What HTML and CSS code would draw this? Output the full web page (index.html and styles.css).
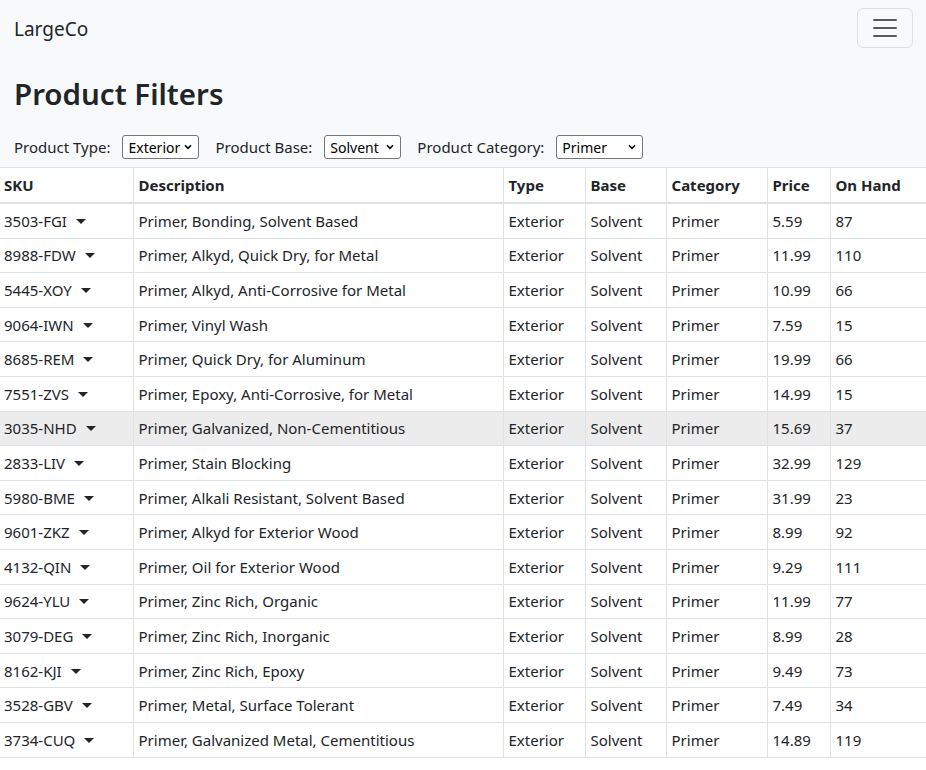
FILE: index.html
```html
<!DOCTYPE html>
<html lang="en">
<head>
<meta charset="utf-8">
<title>LargeCo - Product Filters</title>
<link rel="stylesheet" href="styles.css">
</head>
<body>
<nav class="navbar">
  <a class="brand" href="#">LargeCo</a>
  <button class="toggler" type="button" aria-label="Toggle navigation">
    <svg class="toggler-icon" viewBox="0 0 30 30" width="30" height="30"><path d="M4 7h22M4 15h22M4 23h22" stroke="rgba(33,37,41,0.75)" stroke-width="2" stroke-linecap="round" fill="none"/></svg>
  </button>
</nav>
<header class="page-head">
  <h1 class="title">Product Filters</h1>
  <div class="filters">
    <label class="filter">Product Type:
      <select class="sel sel-type"><option>Exterior</option><option>Interior</option></select>
    </label>
    <label class="filter">Product Base:
      <select class="sel sel-base"><option>Solvent</option><option>Water</option></select>
    </label>
    <label class="filter">Product Category:
      <select class="sel sel-cat"><option>Primer</option><option>Topcoat</option></select>
    </label>
  </div>
</header>
<table class="products">
  <colgroup>
    <col class="c-sku"><col class="c-desc"><col class="c-type"><col class="c-base"><col class="c-cat"><col class="c-price"><col class="c-hand">
  </colgroup>
  <thead>
    <tr><th>SKU</th><th>Description</th><th>Type</th><th>Base</th><th>Category</th><th>Price</th><th>On Hand</th></tr>
  </thead>
  <tbody>
    <tr><td><span class="sku">3503-FGI</span></td><td>Primer, Bonding, Solvent Based</td><td>Exterior</td><td>Solvent</td><td>Primer</td><td>5.59</td><td>87</td></tr>
    <tr><td><span class="sku">8988-FDW</span></td><td>Primer, Alkyd, Quick Dry, for Metal</td><td>Exterior</td><td>Solvent</td><td>Primer</td><td>11.99</td><td>110</td></tr>
    <tr><td><span class="sku">5445-XOY</span></td><td>Primer, Alkyd, Anti-Corrosive for Metal</td><td>Exterior</td><td>Solvent</td><td>Primer</td><td>10.99</td><td>66</td></tr>
    <tr><td><span class="sku">9064-IWN</span></td><td>Primer, Vinyl Wash</td><td>Exterior</td><td>Solvent</td><td>Primer</td><td>7.59</td><td>15</td></tr>
    <tr><td><span class="sku">8685-REM</span></td><td>Primer, Quick Dry, for Aluminum</td><td>Exterior</td><td>Solvent</td><td>Primer</td><td>19.99</td><td>66</td></tr>
    <tr><td><span class="sku">7551-ZVS</span></td><td>Primer, Epoxy, Anti-Corrosive, for Metal</td><td>Exterior</td><td>Solvent</td><td>Primer</td><td>14.99</td><td>15</td></tr>
    <tr class="hover"><td><span class="sku">3035-NHD</span></td><td>Primer, Galvanized, Non-Cementitious</td><td>Exterior</td><td>Solvent</td><td>Primer</td><td>15.69</td><td>37</td></tr>
    <tr><td><span class="sku">2833-LIV</span></td><td>Primer, Stain Blocking</td><td>Exterior</td><td>Solvent</td><td>Primer</td><td>32.99</td><td>129</td></tr>
    <tr><td><span class="sku">5980-BME</span></td><td>Primer, Alkali Resistant, Solvent Based</td><td>Exterior</td><td>Solvent</td><td>Primer</td><td>31.99</td><td>23</td></tr>
    <tr><td><span class="sku">9601-ZKZ</span></td><td>Primer, Alkyd for Exterior Wood</td><td>Exterior</td><td>Solvent</td><td>Primer</td><td>8.99</td><td>92</td></tr>
    <tr><td><span class="sku">4132-QIN</span></td><td>Primer, Oil for Exterior Wood</td><td>Exterior</td><td>Solvent</td><td>Primer</td><td>9.29</td><td>111</td></tr>
    <tr><td><span class="sku">9624-YLU</span></td><td>Primer, Zinc Rich, Organic</td><td>Exterior</td><td>Solvent</td><td>Primer</td><td>11.99</td><td>77</td></tr>
    <tr><td><span class="sku">3079-DEG</span></td><td>Primer, Zinc Rich, Inorganic</td><td>Exterior</td><td>Solvent</td><td>Primer</td><td>8.99</td><td>28</td></tr>
    <tr><td><span class="sku">8162-KJI</span></td><td>Primer, Zinc Rich, Epoxy</td><td>Exterior</td><td>Solvent</td><td>Primer</td><td>9.49</td><td>73</td></tr>
    <tr><td><span class="sku">3528-GBV</span></td><td>Primer, Metal, Surface Tolerant</td><td>Exterior</td><td>Solvent</td><td>Primer</td><td>7.49</td><td>34</td></tr>
    <tr><td><span class="sku">3734-CUQ</span></td><td>Primer, Galvanized Metal, Cementitious</td><td>Exterior</td><td>Solvent</td><td>Primer</td><td>14.89</td><td>119</td></tr>
  </tbody>
</table>
</body>
</html>
```

FILE: styles.css
```css
* { box-sizing: border-box; }

html, body { margin: 0; padding: 0; }

body {
  font-family: "Noto Sans", "Open Sans", "Liberation Sans", sans-serif;
  font-size: 15px;
  line-height: 1.5;
  color: #212529;
  background: #ffffff;
}

.navbar {
  display: flex;
  align-items: center;
  justify-content: space-between;
  padding: 8px 13px 8px 14px;
  background: #f8f9fa;
}

.brand {
  font-size: 19px;
  line-height: 30px;
  padding-top: 2px;
  color: #212529;
  text-decoration: none;
}

.toggler {
  width: 56px;
  height: 40px;
  padding: 0;
  display: flex;
  align-items: center;
  justify-content: center;
  background: transparent;
  border: 1px solid rgba(0, 0, 0, 0.1);
  border-radius: 6px;
}

.toggler-icon { display: block; }

.page-head {
  background: #f8f9fa;
  padding: 16px 14px 8px;
}

.title {
  margin: 0;
  font-size: 29.5px;
  line-height: 43px;
  font-weight: 600;
}

.filters {
  display: flex;
  align-items: center;
  gap: 16px;
  margin-top: 20px;
  height: 24px;
}

.filter {
  display: flex;
  align-items: center;
  gap: 12px;
  white-space: nowrap;
}

.sel {
  appearance: none;
  -webkit-appearance: none;
  height: 24px;
  font-family: inherit;
  font-size: 14px;
  line-height: 22px;
  color: #000;
  padding: 1px 14px 0 5px;
  border: 1px solid #767676;
  border-radius: 3px;
  background-color: #fff;
  background-image: url("data:image/svg+xml,%3Csvg xmlns='http://www.w3.org/2000/svg' viewBox='0 0 10 7'%3E%3Cpath d='M1.2 1.4 5 5.2 8.8 1.4' fill='none' stroke='%23000' stroke-width='1.9'/%3E%3C/svg%3E");
  background-repeat: no-repeat;
  background-position: right 6px center;
  background-size: 8px 6px;
}

.sel-type { width: 77px; }
.sel-base { width: 77px; }
.sel-cat { width: 87px; }

.products {
  width: 100%;
  table-layout: fixed;
  border-collapse: collapse;
  background: #fff;
}

.c-sku { width: 133px; }
.c-desc { width: 370px; }
.c-type { width: 82px; }
.c-base { width: 81px; }
.c-cat { width: 101px; }
.c-price { width: 63px; }
.c-hand { width: auto; }

.products th,
.products td {
  text-align: left;
  line-height: 24px;
  border: 1px solid #dee2e6;
  white-space: nowrap;
  overflow: hidden;
}

.products th {
  font-weight: 700;
  padding: 5px;
  border-bottom: 2px solid #dee2e6;
}

.products td {
  padding: 4.8px 5px;
}

.products th:first-child,
.products td:first-child {
  border-left: none;
  padding-left: 4px;
}

.products th:last-child,
.products td:last-child {
  border-right: none;
}

.products tr.hover td {
  background: #ececec;
}

.sku::after {
  content: "";
  display: inline-block;
  margin-left: 9px;
  vertical-align: 3px;
  border-top: 5px solid #212529;
  border-left: 5px solid transparent;
  border-right: 5px solid transparent;
}
```
